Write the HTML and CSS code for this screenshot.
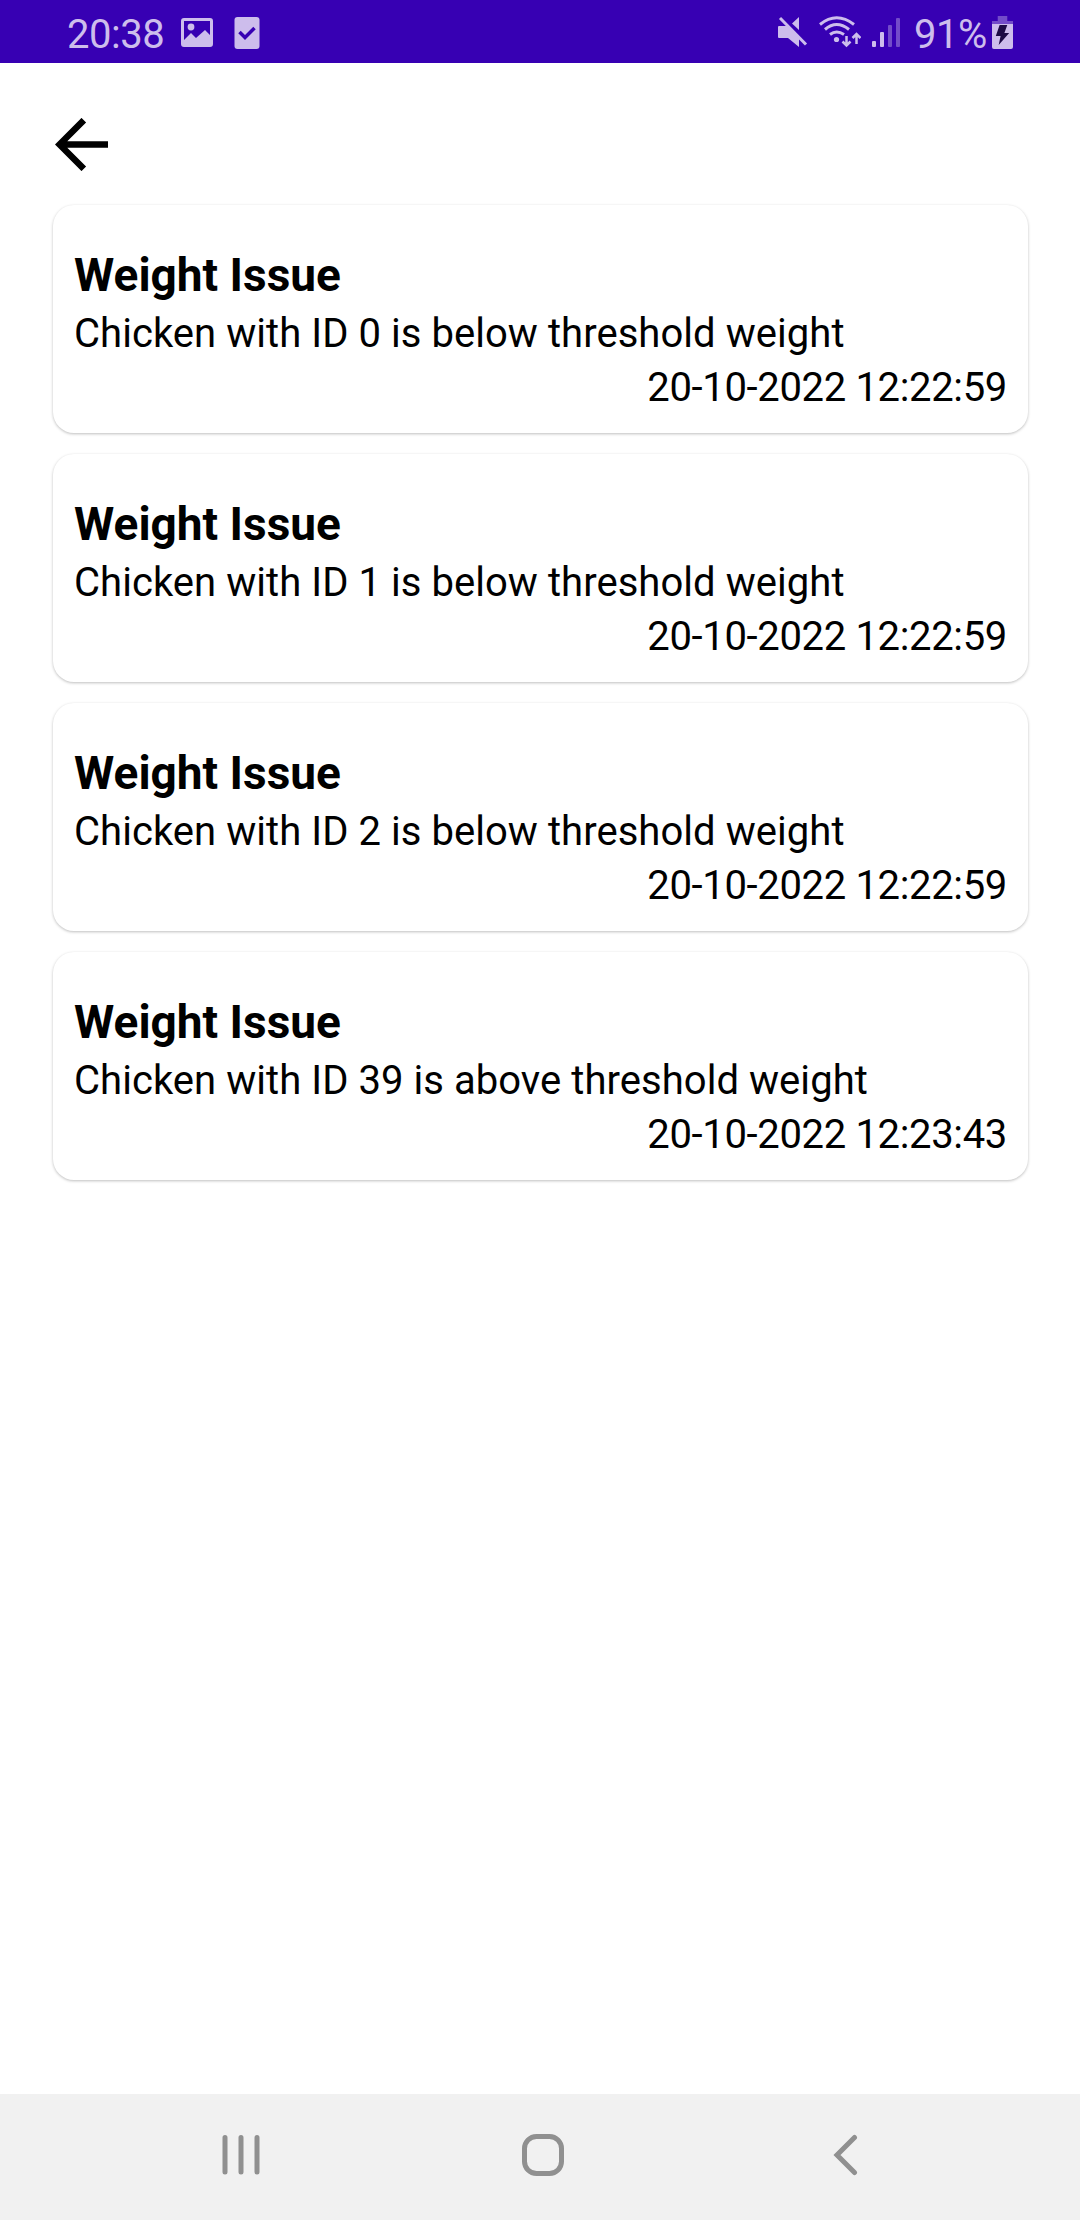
FILE: index.html
```html
<!DOCTYPE html>
<html lang="en">
<head>
<meta charset="utf-8">
<title>Notifications</title>
<link rel="stylesheet" href="styles.css">
</head>
<body>
<div class="screen">
  <header class="status-bar">
    <div class="status-group">
      <span class="clock">20:38</span>
      <svg class="icon-picture" width="32" height="30" viewBox="0 0 32 30"><path fill="currentColor" fill-rule="evenodd" d="M3 0H29Q32 0 32 3V26Q32 29 29 29H3Q0 29 0 26V3Q0 0 3 0ZM3 3V22L10 15L15 20L24 12L29 17V3Z"/><circle cx="10" cy="9" r="3.4" fill="currentColor"/></svg>
      <svg class="icon-task" width="26" height="32" viewBox="0 0 26 32"><rect x=".5" width="25" height="32" rx="3" fill="currentColor"/><path d="M5.500 15L11 20.500L20.500 11" fill="none" stroke="#3700b3" stroke-width="3.500"/></svg>
    </div>
    <div class="status-group">
      <svg class="icon-mute" width="30" height="32" viewBox="0 0 30 32"><path fill="currentColor" d="M1 10H9L21 22V31L10 22H1Q0 22 0 21V11Q0 10 1 10ZM21 1V14L14 7.500Z"/><path d="M2 2L28 28.500" stroke="currentColor" stroke-width="3"/></svg>
      <svg class="icon-wifi" width="42" height="32" viewBox="0 0 42 32"><g fill="none" stroke="currentColor" stroke-width="3"><path d="M1 8.500Q17.500-5 35 8.500M6 13.500Q17.500 3.500 30 13.500M11 18.500Q17.500 13.500 25 18.500"/><path stroke-width="2.500" d="M27.500 20V29M23.500 25.500L27.500 29.500L31.500 25.500M37.500 28V18.500M33.500 22L37.500 18L41.500 22"/></g><circle cx="17.500" cy="23.500" r="2.600" fill="currentColor"/></svg>
      <svg class="icon-signal" width="28" height="31" viewBox="0 0 28 31"><g fill="currentColor"><rect y="24" width="4" height="6" rx="1"/><rect x="8" y="15" width="4" height="15" rx="1"/><g opacity=".4"><rect x="16" y="8" width="4" height="22" rx="1"/><rect x="24" y="1" width="4" height="29" rx="1"/></g></g></svg>
      <span class="battery-level">91%</span>
      <svg class="icon-battery" width="21" height="33" viewBox="0 0 22 33" preserveAspectRatio="none"><path fill="currentColor" opacity=".4" d="M6 0H16V5H22V8H0V5H6Z"/><path fill="currentColor" d="M0 8H22V31Q22 33 20 33H2Q0 33 0 31Z"/><path fill="#1d0b45" d="M8 9H16L13 17H18L7 29L9 20H4Z"/></svg>
    </div>
  </header>
  <main class="content">
    <a class="back" href="#" aria-label="Back"><svg width="53" height="53" viewBox="0 0 53 53"><path d="M53 26.500H5.500M28.800 2.200L4.500 26.500L28.800 50.800" fill="none" stroke="#000" stroke-width="6.500"/></svg></a>
    <section class="list">
      <article class="card">
        <h2 class="title">Weight Issue</h2>
        <p class="message">Chicken with ID 0 is below threshold weight</p>
        <time class="date">20-10-2022 12:22:59</time>
      </article>
      <article class="card">
        <h2 class="title">Weight Issue</h2>
        <p class="message">Chicken with ID 1 is below threshold weight</p>
        <time class="date">20-10-2022 12:22:59</time>
      </article>
      <article class="card">
        <h2 class="title">Weight Issue</h2>
        <p class="message">Chicken with ID 2 is below threshold weight</p>
        <time class="date">20-10-2022 12:22:59</time>
      </article>
      <article class="card">
        <h2 class="title">Weight Issue</h2>
        <p class="message">Chicken with ID 39 is above threshold weight</p>
        <time class="date">20-10-2022 12:23:43</time>
      </article>
    </section>
  </main>
  <nav class="nav-bar">
    <svg width="40" height="42" viewBox="0 0 40 42"><path d="M4 3.500V38M20 3.500V38M36 3.500V38" stroke="currentColor" stroke-width="5" stroke-linecap="round"/></svg>
    <svg width="42" height="42" viewBox="0 0 42 42"><rect x="2.500" y="2.500" width="37" height="37" rx="12" fill="none" stroke="currentColor" stroke-width="5"/></svg>
    <svg width="40" height="42" viewBox="0 0 40 42"><path d="M29.500 3.500L12 21L29.500 38.500" fill="none" stroke="currentColor" stroke-width="5" stroke-linecap="round"/></svg>
  </nav>
</div>
</body>
</html>
```
FILE: styles.css
```css
* {
  box-sizing: border-box;
}

body {
  margin: 0;
  background: #fff;
  color: #000;
  font-family: Roboto, "Liberation Sans", sans-serif;
}

svg {
  display: block;
  flex: none;
}

.screen {
  display: flex;
  flex-direction: column;
  height: 2220px;
}

.status-bar {
  display: flex;
  justify-content: space-between;
  height: 63px;
  padding: 0 67px;
  background: #3700b3;
  color: #cdbdec;
}

.status-group {
  display: flex;
  align-items: flex-start;
}

.clock,
.battery-level {
  font-size: 40px;
  line-height: 70px;
  letter-spacing: -0.45px;
  white-space: nowrap;
}

.clock {
  width: 114px;
}

.icon-picture {
  margin-top: 18px;
}

.icon-task {
  margin: 17px 0 0 21px;
}

.icon-mute {
  margin-top: 16px;
}

.icon-wifi {
  margin: 16px 0 0 11px;
}

.icon-signal {
  margin: 17px 0 0 11px;
}

.battery-level {
  width: 78px;
  margin-left: 14px;
}

.icon-battery {
  margin-top: 16px;
}

.content {
  flex: 1;
  padding: 55px 52px 0 53px;
}

.back {
  display: block;
  width: 53px;
  height: 53px;
  margin-left: 2px;
}

.list {
  display: flex;
  flex-direction: column;
  gap: 21px;
  margin-top: 34px;
}

.card {
  display: flex;
  flex-direction: column;
  height: 228px;
  padding: 39px 21px 0;
  border-radius: 21px;
  background: #fff;
  box-shadow: 0 1px 3px rgba(0, 0, 0, 0.26);
}

.title,
.message {
  margin: 0;
  white-space: nowrap;
}

.title {
  font-size: 46px;
  font-weight: 700;
  line-height: 63px;
}

.message,
.date {
  font-size: 40px;
  line-height: 54px;
}

.message {
  letter-spacing: 0.05px;
}

.date {
  align-self: flex-end;
  letter-spacing: -0.34px;
}

.nav-bar {
  display: flex;
  align-items: center;
  justify-content: space-between;
  height: 126px;
  padding: 0 215px 4px 221px;
  background: #f1f1f1;
  color: #909090;
}
```
